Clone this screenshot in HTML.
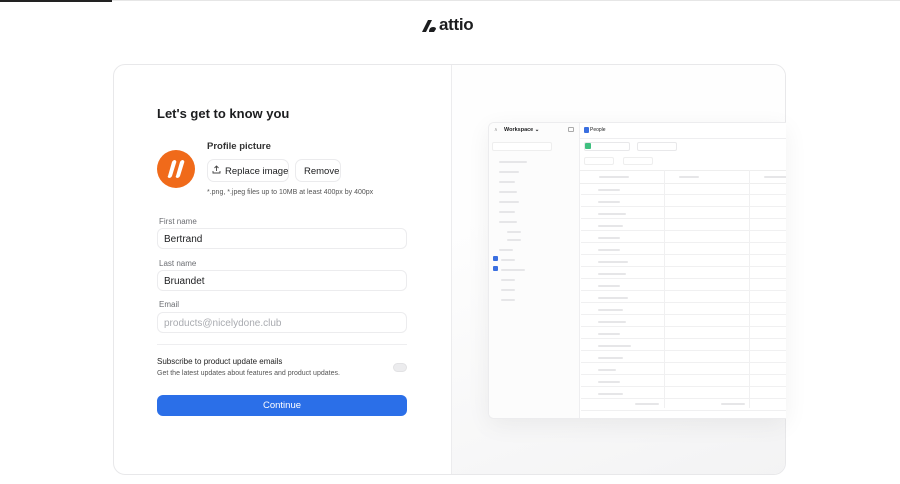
<!DOCTYPE html><html><head><style>
*{box-sizing:border-box;margin:0;padding:0}
body{width:900px;height:484px;background:#fff;font-family:"Liberation Sans",sans-serif;position:relative;overflow:hidden;color:#1c1d1f}
.a{position:absolute;white-space:nowrap}
.card{left:113px;top:64px;width:673px;height:411px;border:1px solid #e8e8ea;border-radius:12px;overflow:hidden}
.inp{position:absolute;left:157px;width:250px;height:21px;border:1px solid #ececee;border-radius:6px;font-size:10px;padding:5px 6px}
.lbl{position:absolute;left:159px;font-size:8px;color:#6b6d72}
.bar{position:absolute;height:2px;background:#e6e6e8;border-radius:1px}
.row{position:absolute;left:92px;width:206px;height:12px;border-bottom:1px solid #f0f0f1}
</style></head><body>
<div class="a" style="left:0;top:0;width:900px;height:1px;background:#e6e6e6"></div>
<div class="a" style="left:0;top:0;width:112px;height:2px;background:#222"></div>
<svg class="a" style="left:421px;top:18px" width="17" height="15" viewBox="0 0 17 15"><path d="M1 14 L7 2 L11 2 L5 14Z" fill="#1c1d1f"/><path d="M8 14 Q8 9 12 9 Q15 9 15 11 L13 14Z" fill="#1c1d1f"/></svg>
<div class="a" style="left:439px;top:15px;font-size:17px;font-weight:bold;letter-spacing:-0.3px">attio</div>
<div class="a card">
 <div class="a" style="left:337px;top:0;width:336px;height:411px;background:linear-gradient(160deg,#fefefe 30%,#f3f3f4);border-left:1px solid #ececee"></div>
</div>
<div class="a" style="left:157px;top:106px;font-size:13px;font-weight:bold">Let's get to know you</div>
<div class="a" style="left:207px;top:141px;font-size:9.5px;font-weight:bold;color:#333">Profile picture</div>
<div class="a" style="left:157px;top:150px;width:38px;height:38px;border-radius:50%;background:#f06a1a"></div>
<svg class="a" style="left:157px;top:150px" width="38" height="38"><path d="M13 27 L17 13 Q18 11 20 11 Q22 12 21 14 L17 27 Q16 29 14 29 Q12 28 13 27Z M21 27 L25 13 Q26 11 28 11 Q30 12 29 14 L25 27 Q24 29 22 29 Q20 28 21 27Z" fill="#fff" transform="translate(-2,-1)"/></svg>
<div class="a" style="left:207px;top:159px;width:82px;height:23px;border:1px solid #ebebed;border-radius:7px;font-size:9.5px;padding:6px 0 0 17px">Replace image</div>
<svg class="a" style="left:212px;top:165px" width="9" height="9"><path d="M4.5 6V1M2.5 3l2-2 2 2M1 6v2h7V6" stroke="#444" fill="none" stroke-width="0.9"/></svg>
<div class="a" style="left:295px;top:159px;width:46px;height:23px;border:1px solid #ebebed;border-radius:7px;font-size:9.5px;padding:6px 0 0 8px">Remove</div>
<div class="a" style="left:207px;top:189px;font-size:7px;color:#555">*.png, *.jpeg files up to 10MB at least 400px by 400px</div>
<div class="lbl" style="top:217px">First name</div>
<div class="inp" style="top:228px">Bertrand</div>
<div class="lbl" style="top:259px">Last name</div>
<div class="inp" style="top:270px">Bruandet</div>
<div class="lbl" style="top:300px">Email</div>
<div class="inp" style="top:312px;color:#a9abb0">products@nicelydone.club</div>
<div class="a" style="left:157px;top:344px;width:250px;height:1px;background:#eeeef0"></div>
<div class="a" style="left:157px;top:357px;font-size:8px;color:#222">Subscribe to product update emails</div>
<div class="a" style="left:157px;top:370px;font-size:7px;color:#555">Get the latest updates about features and product updates.</div>
<div class="a" style="left:393px;top:363px;width:14px;height:9px;border-radius:5px;background:#ececee;border:1px solid #e2e2e4"></div>
<div class="a" style="left:157px;top:395px;width:250px;height:21px;border-radius:6px;background:#2b6fe8;color:#fff;font-size:9.5px;text-align:center;line-height:21px">Continue</div>
<!-- mock -->
<div class="a" style="left:488px;top:122px;width:298px;height:297px;background:#fff;border:1px solid #ececee;border-right:none;border-radius:6px 0 0 6px;box-shadow:0 6px 24px rgba(0,0,0,.06);overflow:hidden">
 <div class="a" style="left:90px;top:0;width:1px;height:297px;background:#eeeef0"></div>
 <div class="a" style="left:0;top:0;width:90px;height:297px;background:#fcfcfc"></div>
 <div class="a" style="left:15px;top:4px;font-size:5.5px;font-weight:bold">Workspace ⌄</div>
 <div class="a" style="left:5px;top:4px;font-size:5px;color:#999">∧</div>
 <div class="a" style="left:79px;top:4px;width:6px;height:5px;border:1px solid #aaa;border-radius:1px"></div>
 <div class="a" style="left:95px;top:4px;width:5px;height:6px;background:#3a6fe0;border-radius:1px"></div>
 <div class="a" style="left:101px;top:4px;font-size:5px">People</div>
 <div class="a" style="left:90px;top:15px;width:208px;height:1px;background:#eeeef0"></div>
 <div class="a" style="left:95px;top:19px;width:46px;height:9px;border:1px solid #e8e8ea;border-radius:2px"></div>
 <div class="a" style="left:96px;top:20px;width:6px;height:6px;background:#3fbf7f;border-radius:1px"></div>
 <div class="a" style="left:148px;top:19px;width:40px;height:9px;border:1px solid #e8e8ea;border-radius:2px"></div>
 <div class="a" style="left:95px;top:34px;width:30px;height:8px;border:1px solid #eee;border-radius:2px"></div>
 <div class="a" style="left:134px;top:34px;width:30px;height:8px;border:1px solid #eee;border-radius:2px"></div>
 <div class="a" style="left:90px;top:47px;width:208px;height:14px;border-top:1px solid #eee;border-bottom:1px solid #eee"></div>
 <div class="a" style="left:175px;top:47px;width:1px;height:238px;background:#f0f0f1"></div>
 <div class="a" style="left:260px;top:47px;width:1px;height:238px;background:#f0f0f1"></div>
 <div class="bar" style="left:110px;top:53px;width:30px"></div><div class="bar" style="left:190px;top:53px;width:20px"></div><div class="bar" style="left:275px;top:53px;width:23px"></div>
 <div class="row" style="top:60px"></div><div class="row" style="top:72px"></div><div class="row" style="top:84px"></div><div class="row" style="top:96px"></div><div class="row" style="top:108px"></div><div class="row" style="top:120px"></div><div class="row" style="top:132px"></div><div class="row" style="top:144px"></div><div class="row" style="top:156px"></div><div class="row" style="top:168px"></div><div class="row" style="top:180px"></div><div class="row" style="top:192px"></div><div class="row" style="top:204px"></div><div class="row" style="top:216px"></div><div class="row" style="top:228px"></div><div class="row" style="top:240px"></div><div class="row" style="top:252px"></div><div class="row" style="top:264px"></div><div class="row" style="top:276px"></div>
 <div class="bar" style="left:109px;top:66px;width:22px"></div><div class="bar" style="left:109px;top:78px;width:22px"></div><div class="bar" style="left:109px;top:90px;width:28px"></div><div class="bar" style="left:109px;top:102px;width:25px"></div><div class="bar" style="left:109px;top:114px;width:22px"></div><div class="bar" style="left:109px;top:126px;width:22px"></div><div class="bar" style="left:109px;top:138px;width:30px"></div><div class="bar" style="left:109px;top:150px;width:28px"></div><div class="bar" style="left:109px;top:162px;width:22px"></div><div class="bar" style="left:109px;top:174px;width:30px"></div><div class="bar" style="left:109px;top:186px;width:25px"></div><div class="bar" style="left:109px;top:198px;width:28px"></div><div class="bar" style="left:109px;top:210px;width:22px"></div><div class="bar" style="left:109px;top:222px;width:33px"></div><div class="bar" style="left:109px;top:234px;width:25px"></div><div class="bar" style="left:109px;top:246px;width:18px"></div><div class="bar" style="left:109px;top:258px;width:22px"></div><div class="bar" style="left:109px;top:270px;width:25px"></div>
 <div class="bar" style="left:146px;top:280px;width:24px"></div><div class="bar" style="left:232px;top:280px;width:24px"></div>
 <div class="a" style="left:3px;top:19px;width:60px;height:9px;border:1px solid #eee;border-radius:2px;background:#fff"></div>
 <div class="bar" style="left:10px;top:38px;width:28px"></div><div class="bar" style="left:10px;top:48px;width:20px"></div><div class="bar" style="left:10px;top:58px;width:16px"></div><div class="bar" style="left:10px;top:68px;width:18px"></div><div class="bar" style="left:10px;top:78px;width:20px"></div><div class="bar" style="left:10px;top:88px;width:16px"></div><div class="bar" style="left:10px;top:98px;width:18px"></div><div class="bar" style="left:18px;top:108px;width:14px"></div><div class="bar" style="left:18px;top:116px;width:14px"></div><div class="bar" style="left:10px;top:126px;width:14px"></div><div class="bar" style="left:12px;top:136px;width:14px"></div><div class="bar" style="left:12px;top:146px;width:24px"></div><div class="bar" style="left:12px;top:156px;width:14px"></div><div class="bar" style="left:12px;top:166px;width:14px"></div><div class="bar" style="left:12px;top:176px;width:14px"></div>
 <div class="a" style="left:4px;top:133px;width:5px;height:5px;background:#3a6fe0;border-radius:1px"></div>
 <div class="a" style="left:4px;top:143px;width:5px;height:5px;background:#3a6fe0;border-radius:1px"></div>
</div>
</body></html>
